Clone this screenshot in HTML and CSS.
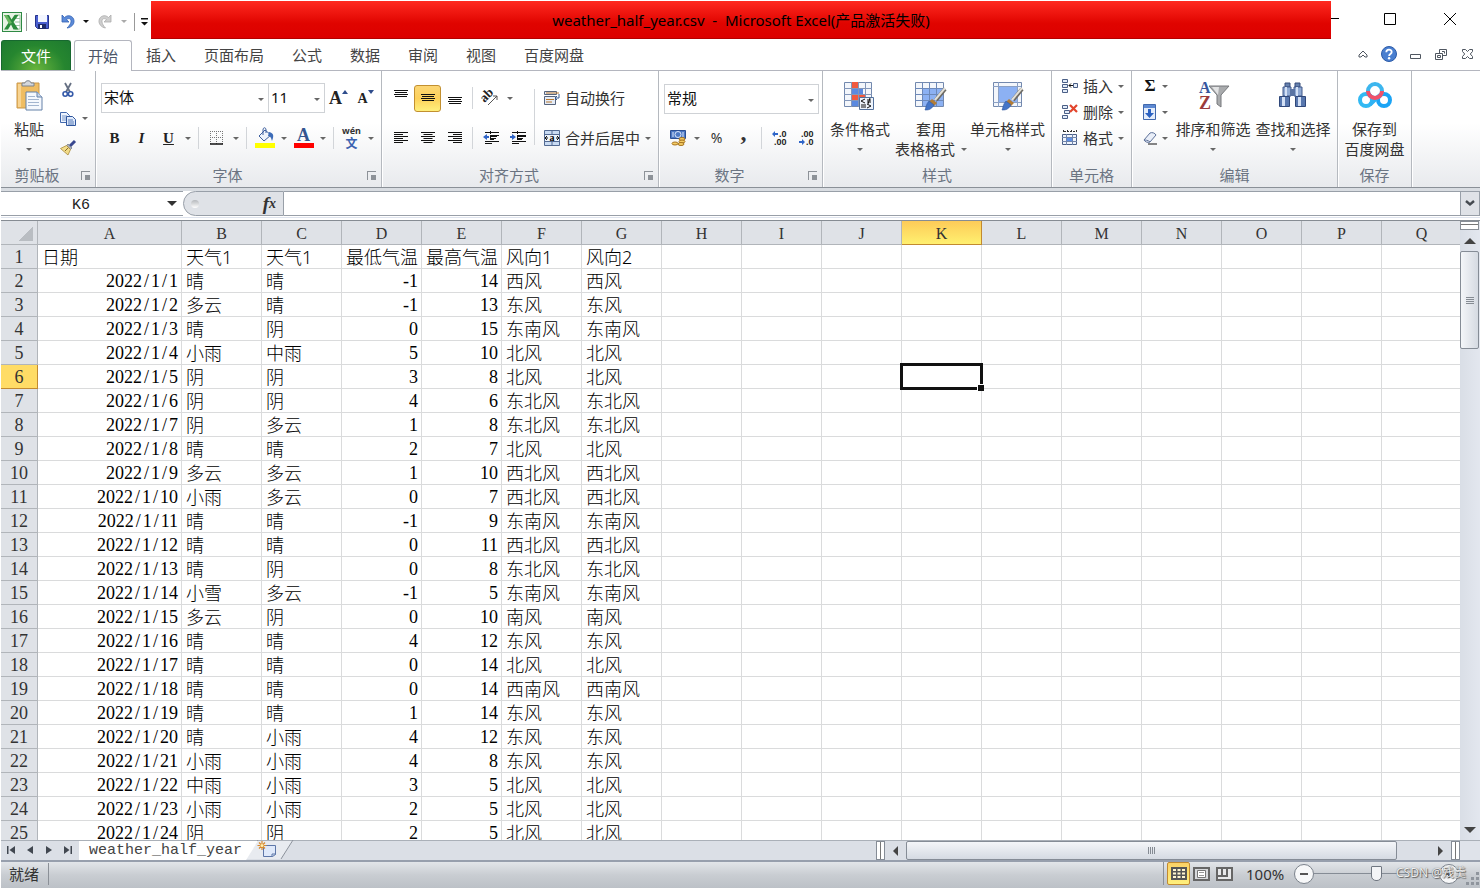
FILE: index.html
```html
<!DOCTYPE html>
<html lang="zh-CN">
<head>
<meta charset="utf-8">
<title>weather_half_year.csv - Microsoft Excel</title>
<link rel="stylesheet" href="styles.css">
</head>
<body>
<div class="app">
  <header class="titlebar">
    <div class="quick">
      <svg class="logo" width="20" height="20" viewBox="0 0 20 20"><rect x=".5" y=".5" width="19" height="19" fill="#e8f3e4" stroke="#2f8a45"/><path d="M13 3h5v14h-5" fill="#fff" stroke="#9cc7a0"/><path d="M13 6.500h5M13 10h5M13 13.500h5" stroke="#9cc7a0"/><path d="M2 3h5l2.500 4.500L12.500 3h4L11.500 10l5 7.500h-5l-2.500-5-3 5H2L7 10z" fill="#2c8c3c"/><path d="M2 3h3l5 8-3 1z" fill="#69b660"/></svg>
      <i class="qsep"></i>
      <button aria-label="保存"><svg width="16" height="16" viewBox="0 0 16 16"><path d="M1.500 1.500h13v13h-11l-2-2z" fill="#4a5fd0" stroke="#26348c"/><path d="M4 1h9v7H4z" fill="#f3f6ff"/><path d="M4 10h8v5H4z" fill="#1e2b6b"/><path d="M6 11h2v3H6z" fill="#fff"/></svg></button>
      <button aria-label="撤消"><svg width="16" height="16" viewBox="0 0 16 16"><path d="M2 1v7h7L6.500 5.600C9 3.500 11.500 5 11 8c-.3 2-2 4-4 6C11.500 13.500 14.500 10 14 6.500 13.500 2 8 0 4.500 3.500z" fill="#5b8ad8" stroke="#3463b5" stroke-width=".8"/></svg></button>
      <button class="arrow dark" aria-label="撤消选项"></button>
      <button aria-label="重做"><svg width="16" height="16" viewBox="0 0 16 16"><path d="M14 1v7H7l2.500-2.400C7 3.500 4.500 5 5 8c.3 2 1.500 4 3.500 6C4.500 13.500 1.500 10 2 6.500 2.500 2 8 0 11.500 3.500z" fill="#cfcfcf" stroke="#acacac" stroke-width=".8"/></svg></button>
      <button class="arrow pale" aria-label="重做选项"></button>
      <i class="qsep"></i>
      <button class="custom" aria-label="自定义快速访问工具栏"><svg width="7" height="8" viewBox="0 0 7 8"><path d="M0 0h7v1.500H0zM0 4h7L3.500 7.500z" fill="#111"/></svg></button>
    </div>
    <h1 class="title">weather_half_year.csv&nbsp; -&nbsp; Microsoft Excel(产品激活失败)</h1>
    <div class="window">
      <button class="wmin" aria-label="最小化"><svg width="8" height="12" viewBox="0 0 8 12"><path d="M0 5.500h8" stroke="#000"/></svg></button>
      <button aria-label="最大化"><svg width="12" height="12" viewBox="0 0 12 12"><path d="M.5.5h11v11H.5z" fill="none" stroke="#000"/></svg></button>
      <button aria-label="关闭"><svg width="12" height="12" viewBox="0 0 12 12"><path d="M0 0l12 12M12 0L0 12" stroke="#000"/></svg></button>
    </div>
  </header>

  <nav class="tabs">
    <button class="file">文件</button>
    <button class="tab active">开始</button>
    <button class="tab">插入</button>
    <button class="tab">页面布局</button>
    <button class="tab">公式</button>
    <button class="tab">数据</button>
    <button class="tab">审阅</button>
    <button class="tab">视图</button>
    <button class="tab">百度网盘</button>
    <div class="tabtools">
      <button aria-label="折叠功能区"><svg width="10" height="9" viewBox="0 0 10 9"><path d="M5 1L1 5v2h2l2-2 2 2h2V5z" fill="#fff" stroke="#4f5660"/></svg></button>
      <button aria-label="帮助"><svg width="16" height="16" viewBox="0 0 16 16"><circle cx="8" cy="8" r="7.500" fill="#4a7fd0" stroke="#2c5ba8"/><path d="M5.300 6.200C5.300 2.800 10.700 2.900 10.700 6c0 2-2.600 2-2.600 4" fill="none" stroke="#fff" stroke-width="1.800"/><circle cx="8.100" cy="12.200" r="1.200" fill="#fff"/></svg></button>
      <button aria-label="最小化窗口"><svg width="11" height="9" viewBox="0 0 11 9"><path d="M.5 4.500h10v4H.5z" fill="#fff" stroke="#4f5660"/></svg></button>
      <button aria-label="还原窗口"><svg width="12" height="11" viewBox="0 0 12 11"><path d="M4.500.5h7v6h-7z" fill="#fff" stroke="#4f5660"/><path d="M7 2.500h2.500v2" fill="none" stroke="#4f5660"/><path d="M.5 4.500h7v6h-7z" fill="#fff" stroke="#4f5660"/><path d="M2.500 6.500h3v2h-3z" fill="none" stroke="#4f5660"/></svg></button>
      <button aria-label="关闭窗口"><svg width="11" height="10" viewBox="0 0 11 10"><path d="M.5.5h3l2 2 2-2h3v2L8.300 5l2.200 2.500v2h-3l-2-2-2 2h-3v-2L2.700 5 .5 2.500z" fill="#fff" stroke="#4f5660"/></svg></button>
    </div>
  </nav>

  <main class="ribbon">
    <section class="group clip">
      <div class="body row">
        <button class="big"><svg width="32" height="32" viewBox="0 0 32 32"><path d="M4 3h22v25H4z" fill="#f0bd62" stroke="#c9974a"/><path d="M5 4h3v23H5z" fill="#f8d492"/><path d="M9 6V3h3c0-3 6-3 6 0h3v3z" fill="#d4d7dc" stroke="#7d838c"/><path d="M13 12h11l5 5v13H13z" fill="#f5f8fd" stroke="#6581a8"/><path d="M24 12v5h5" fill="#cbd8eb" stroke="#6581a8"/><path d="M15 16.500h7M15 19.500h11M15 22.500h11M15 25.500h11" stroke="#a3b5cf"/></svg><span>粘贴</span><i class="tri"></i></button>
        <div class="clipcol">
          <button class="ico" aria-label="剪切"><svg width="16" height="16" viewBox="0 0 16 16"><path d="M5 1l5 9M11 1L6 10" stroke="#667083" stroke-width="1.800"/><circle cx="5.200" cy="12" r="2.200" fill="none" stroke="#3459a8" stroke-width="1.600"/><circle cx="10.600" cy="12" r="2.200" fill="none" stroke="#3459a8" stroke-width="1.600"/></svg></button>
          <div class="row"><button class="ico" aria-label="复制"><svg width="16" height="16" viewBox="0 0 16 16"><path d="M.5 1.500h6l3 3v7h-9z" fill="#eef4fd" stroke="#4269ad"/><path d="M2 5h5M2 7h5M2 9h5" stroke="#7897c9"/><path d="M6.500 5.500h6l3 3v6h-9z" fill="#dfeafb" stroke="#2e559c"/><path d="M8 9h5M8 11h6M8 13h6" stroke="#5578b5"/></svg></button><button class="arrow" aria-label="复制选项"></button></div>
          <button class="ico" aria-label="格式刷"><svg width="16" height="16" viewBox="0 0 16 16"><path d="M15 1l-5 5" stroke="#39478f" stroke-width="3"/><path d="M8 4l4 4-1.500 1.500-4-4z" fill="#a8adba" stroke="#5d6370" stroke-width=".6"/><path d="M6.500 5.500l4 4L8 15 .5 8.500z" fill="#f2dc8a" stroke="#a88a3a" stroke-width=".8"/><path d="M5 11l3-3" stroke="#8a6d28"/></svg></button>
        </div>
      </div>
      <footer><span>剪贴板</span><button class="launch" aria-label="剪贴板设置"></button></footer>
    </section>

    <section class="group font">
      <div class="body lines">
        <div class="row">
          <label class="combo fname"><select aria-label="字体"><option>宋体</option></select></label><label class="combo fsize"><select aria-label="字号"><option>11</option></select></label>
          <button class="ico serif grow" aria-label="增大字号">A<svg width="6" height="4" viewBox="0 0 6 4"><path d="M0 4h6L3 0z" fill="#2e4c8c"/></svg></button>
          <button class="ico serif shrink" aria-label="减小字号">A<svg width="6" height="4" viewBox="0 0 6 4"><path d="M0 0h6L3 4z" fill="#2e4c8c"/></svg></button>
        </div>
        <div class="row">
          <button class="ico serif">B</button><button class="ico serif it">I</button><button class="ico serif un">U</button><button class="arrow" aria-label="下划线选项"></button><i class="sep"></i>
          <button class="ico" aria-label="边框"><svg width="14" height="14" viewBox="0 0 14 14"><path d="M.5 0v13M6.500 0v13M12.500 0v13M0 .5h13M0 6.500h13" stroke="#777" stroke-dasharray="1 1"/><path d="M0 13h13" stroke="#111" stroke-width="1.500"/></svg></button><button class="arrow" aria-label="边框选项"></button><i class="sep"></i>
          <button class="ico" aria-label="填充颜色"><svg width="20" height="20" viewBox="0 0 20 20"><path d="M4 8l6-6 6 5-7 6z" fill="#eef3fb" stroke="#3d5f9e"/><path d="M8 7V2C8-1 11-1 11 2v3" fill="none" stroke="#3d5f9e"/><path d="M14 4c5 1 5 4 3 9-1-4-2-5-4-5z" fill="#3d6cb8"/><path d="M0 15h20v5H0z" fill="#ff0"/></svg></button><button class="arrow" aria-label="填充颜色选项"></button>
          <button class="ico serif fcolor" aria-label="字体颜色">A</button><button class="arrow" aria-label="字体颜色选项"></button><i class="sep"></i>
          <button class="ico pinyin" aria-label="拼音指南"><small>wén</small><b>文</b></button><button class="arrow" aria-label="拼音选项"></button>
        </div>
      </div>
      <footer><span>字体</span><button class="launch" aria-label="字体设置"></button></footer>
    </section>

    <section class="group align">
      <div class="body row top">
        <div class="lines">
          <div class="row">
            <button class="ico" aria-label="顶端对齐"><svg width="14" height="20" viewBox="0 0 14 20"><path d="M0 2.500h14M1 4.500h12M0 6.500h14M1 8.500h12" stroke="#111"/></svg></button>
            <button class="ico on" aria-label="垂直居中"><svg width="14" height="20" viewBox="0 0 14 20"><path d="M0 6.500h14M1 8.500h12M0 10.500h14M1 12.500h12" stroke="#111"/></svg></button>
            <button class="ico" aria-label="底端对齐"><svg width="14" height="20" viewBox="0 0 14 20"><path d="M0 9.500h14M1 11.500h12M0 13.500h14M1 15.500h12" stroke="#111"/></svg></button><i class="sep"></i>
            <button class="ico" aria-label="方向"><svg width="16" height="16" viewBox="0 0 16 16"><text x="-1" y="9" transform="rotate(-45 5 8)" font-family="Liberation Serif" font-weight="700" font-size="13" fill="#222">ab</text><path d="M5 15l9-9M14 6h-4M14 6v4" stroke="#555" fill="none"/></svg></button><button class="arrow" aria-label="方向选项"></button>
          </div>
          <div class="row">
            <button class="ico" aria-label="左对齐"><svg width="14" height="12" viewBox="0 0 14 12"><path d="M0 .5h14M0 2.500h9M0 4.500h14M0 6.500h9M0 8.500h14M0 10.500h9" stroke="#111"/></svg></button>
            <button class="ico" aria-label="居中"><svg width="14" height="12" viewBox="0 0 14 12"><path d="M0 .5h14M2.500 2.500h9M0 4.500h14M2.500 6.500h9M0 8.500h14M2.500 10.500h9" stroke="#111"/></svg></button>
            <button class="ico" aria-label="右对齐"><svg width="14" height="12" viewBox="0 0 14 12"><path d="M0 .5h14M5 2.500h9M0 4.500h14M5 6.500h9M0 8.500h14M5 10.500h9" stroke="#111"/></svg></button><i class="sep"></i>
            <button class="ico" aria-label="减少缩进"><svg width="16" height="14" viewBox="0 0 16 14"><path d="M2 1.500h14M7 4.500h9M7 7.500h6M2 10.500h14M2 12.500h7" stroke="#111"/><path d="M7 5h7M7 8h4" stroke="#111" stroke-width="2"/><path d="M7.500 0v14" stroke="#111" stroke-dasharray="1 1"/><path d="M0 6l4-3v2h2v2H4v2z" fill="#2f65c8"/></svg></button>
            <button class="ico" aria-label="增加缩进"><svg width="16" height="14" viewBox="0 0 16 14"><path d="M2 1.500h14M7 4.500h9M7 7.500h6M2 10.500h14M2 12.500h7" stroke="#111"/><path d="M7 5h9M7 8h5" stroke="#111" stroke-width="2"/><path d="M7.500 0v14" stroke="#111" stroke-dasharray="1 1"/><path d="M6 6L2 3v2H0v2h2v2z" fill="#2f65c8"/></svg></button>
          </div>
        </div>
        <i class="sep tall"></i>
        <div class="lines wide">
          <button class="text"><svg width="16" height="16" viewBox="0 0 16 16"><path d="M.5 1.500h12v3H.5z" fill="#e5ecf7" stroke="#56647d"/><path d="M.5 6.500h11v8H.5z" fill="#e5ecf7" stroke="#56647d"/><path d="M2 3h13M2 9.500h8M2 12h6" stroke="#b9792f"/><path d="M15 4v4h-3M13 6l-2 2 2 2" fill="none" stroke="#35588f"/></svg><span>自动换行</span></button>
          <div class="row"><button class="text"><svg width="16" height="16" viewBox="0 0 16 16"><path d="M.5.5h15v15H.5z" fill="#c9dbf3" stroke="#536a92"/><path d="M0 4.500h16M0 11.500h16M8 0v4M8 12v4" stroke="#536a92"/><path d="M1 5h14v6H1z" fill="#eef4fc"/><path d="M1 8h3M12 8h3M3 6l-2 2 2 2M13 6l2 2-2 2" stroke="#111" fill="none"/><text x="5.500" y="10.500" font-family="Liberation Serif" font-size="10" font-weight="700">a</text></svg><span>合并后居中</span></button><button class="arrow" aria-label="合并选项"></button></div>
        </div>
      </div>
      <footer><span>对齐方式</span><button class="launch" aria-label="对齐设置"></button></footer>
    </section>

    <section class="group number">
      <div class="body lines">
        <label class="combo fmt"><select aria-label="数字格式"><option>常规</option></select></label>
        <div class="row">
          <button class="ico" aria-label="会计数字格式"><svg width="16" height="16" viewBox="0 0 16 16"><path d="M.5.5h15v8H.5z" fill="#4d79c4" stroke="#2b4f94"/><ellipse cx="8" cy="4.500" rx="3" ry="3" fill="none" stroke="#dbe7fa"/><path d="M3 2v5M13 2v5" stroke="#dbe7fa"/><ellipse cx="12" cy="9" rx="3" ry="1.500" fill="#f5cd64" stroke="#a77421"/><ellipse cx="12" cy="11.500" rx="3" ry="1.500" fill="#f5cd64" stroke="#a77421"/><ellipse cx="5" cy="13.500" rx="3" ry="1.500" fill="#f5cd64" stroke="#a77421"/><ellipse cx="11" cy="14" rx="3" ry="1.500" fill="#f5cd64" stroke="#a77421"/></svg></button><button class="arrow" aria-label="会计格式选项"></button><button class="ico pct">%</button><button class="ico comma">,</button><i class="sep"></i>
          <button class="ico" aria-label="增加小数位数"><svg width="16" height="16" viewBox="0 0 16 16"><path d="M0 4l3-3v2h3v2H3v2z" fill="#2f65c8"/><text x="7" y="7" class="dec">.0</text><text x="2" y="15" class="dec">.00</text></svg></button>
          <button class="ico" aria-label="减少小数位数"><svg width="16" height="16" viewBox="0 0 16 16"><text x="2" y="7" class="dec">.00</text><path d="M6 12L3 9v2H0v2h3v2z" fill="#2f65c8"/><text x="7" y="15" class="dec">.0</text></svg></button>
        </div>
      </div>
      <footer><span>数字</span><button class="launch" aria-label="数字设置"></button></footer>
    </section>

    <section class="group styles">
      <div class="body row">
        <button class="big"><svg width="32" height="32" viewBox="0 0 32 32"><path d="M.5 2.500h27v24H.5z" fill="#f3f6fb" stroke="#7389ae"/><path d="M7 2h7v6H7zM7 14h14v6H7z" fill="#f0593e"/><path d="M7 8h12v6H7zM7 20h7v6H7z" fill="#5a89e0"/><path d="M0 8.500h28M0 14.500h28M0 20.500h28M7.500 2v25M14.500 2v25M21.500 2v25" stroke="#8397ba"/><path d="M15.500 17.500h14v12h-14z" fill="#eef4fc" stroke="#53719c"/><path d="M21 19l-4 2 4 2M17 25h5M17 27h5M23 20h4M23 22h4M26 18l-2 6M23 24l4 2-4 2" stroke="#111" fill="none"/></svg><span>条件格式</span><i class="tri"></i></button>
        <button class="big"><svg width="32" height="32" viewBox="0 0 32 32"><path d="M.5 2.500h28v24H.5z" fill="#f3f6fb" stroke="#7389ae"/><path d="M7 8h21v18H7z" fill="#8cb1f3"/><path d="M0 8.500h28M0 14.500h28M0 20.500h28M7.500 2v25M14.500 2v25M21.500 2v25" stroke="#6d89b9"/><use href="#brush"/></svg><span>套用<br>表格格式<i class="tri side"></i></span></button>
        <button class="big"><svg width="32" height="32" viewBox="0 0 32 32"><path d="M1.500 2.500h28v24h-28z" fill="#f3f6fb" stroke="#7389ae"/><path d="M6 7h19v15H6z" fill="#8cb1f3"/><path d="M1 6.500h28M1 22.500h28M6.500 2v25M25.500 2v25" stroke="#8ba0c4"/><g id="brush"><path d="M30 9L21 20" stroke="#6d6a62" stroke-width="4"/><path d="M30 8L20 20" stroke="#e2e0d8" stroke-width="2"/><path d="M17 19l5 4-3 3-5-4z" fill="#b27c36"/><path d="M14 21l5 4c-3 5-6 5-9 5 1-2 1-6 4-9z" fill="#4475c8" stroke="#2f579e" stroke-width=".6"/></g></svg><span>单元格样式</span><i class="tri"></i></button>
      </div>
      <footer><span>样式</span></footer>
    </section>

    <section class="group cells">
      <div class="body stack">
        <div class="row"><button class="text"><svg width="16" height="16" viewBox="0 0 16 16"><path d="M.5 1.500h5v3h-5zM.5 6.500h5v3h-5zM.5 11.500h5v3h-5zM11.500 5.500h4v4h-4z" fill="#e3ecf9" stroke="#4a5f86"/><path d="M7 7.500h4M9 5.500L7 7.500l2 2" stroke="#111" fill="none"/></svg><span>插入</span></button><button class="arrow" aria-label="插入选项"></button></div>
        <div class="row"><button class="text"><svg width="16" height="16" viewBox="0 0 16 16"><path d="M.5 1.500h5v3h-5zM2.500 6.500h5v3h-5zM.5 11.500h5v3h-5z" fill="#e3ecf9" stroke="#4a5f86"/><path d="M8 1l7 7M15 1L8 8" stroke="#e2452c" stroke-width="2.200"/></svg><span>删除</span></button><button class="arrow" aria-label="删除选项"></button></div>
        <div class="row"><button class="text"><svg width="16" height="16" viewBox="0 0 16 16"><path d="M.5 4.500h14v10H.5z" fill="#eef3fb" stroke="#4a5f86"/><path d="M5 8h5v4H5z" fill="#5c8fe6"/><path d="M0 7.500h15M0 11.500h15M4.500 4v11M10.500 4v11" stroke="#6f84ab"/><path d="M1.500 0v3M14.500 0v3M2 1.500h12M5.500 0v3M9.500 0v3" stroke="#333" stroke-dasharray="2 1"/></svg><span>格式</span></button><button class="arrow" aria-label="格式选项"></button></div>
      </div>
      <footer><span>单元格</span></footer>
    </section>

    <section class="group edit">
      <div class="body row">
        <div class="stack">
          <div class="row"><button class="mini sigma">Σ</button><button class="arrow" aria-label="求和选项"></button></div>
          <div class="row"><button class="mini" aria-label="填充"><svg width="14" height="16" viewBox="0 0 14 16"><path d="M.5.5h12v15H.5z" fill="#e4edfb" stroke="#4169ad"/><path d="M1 1h11v3H1z" fill="#5d89d2"/><path d="M5 5h3v4h3l-4.500 5L2 9h3z" fill="#2b62c2"/></svg></button><button class="arrow" aria-label="填充选项"></button></div>
          <div class="row"><button class="mini" aria-label="清除"><svg width="14" height="14" viewBox="0 0 14 14"><path d="M1 9l6-7c2-1 5 0 6 2l-6 7c-2 1-5 0-6-2z" fill="#e9eef8" stroke="#5d7199"/><path d="M1 9c1 0 4 0 6 2" fill="none" stroke="#5d7199"/><path d="M5 13h9" stroke="#111"/></svg></button><button class="arrow" aria-label="清除选项"></button></div>
        </div>
        <button class="big"><svg width="32" height="32" viewBox="0 0 32 32"><text x="2" y="13" font-family="Liberation Serif" font-weight="700" font-size="16" fill="#36569e">A</text><text x="2" y="29" font-family="Liberation Serif" font-weight="700" font-size="18" fill="#9b3b3b">Z</text><path d="M12 6h20l-8 9v12l-4-3v-9z" fill="#a9abad" stroke="#77797c"/><path d="M15 7h7l-1 8z" fill="#e2e3e4"/></svg><span>排序和筛选</span><i class="tri"></i></button>
        <button class="big"><svg width="32" height="32" viewBox="0 0 32 32"><path d="M8 3h5v4H8zM18 3h5v4h-5z" fill="#6681ae" stroke="#374d7a"/><path d="M6 7h8v9H6zM17 7h8v9h-8z" fill="#8fa9d3" stroke="#41598a"/><path d="M13 9h5v7h-5z" fill="#5a74a3"/><path d="M2.500 16.500h10v10h-10zM18.500 16.500h10v10h-10z" fill="#5877ae" stroke="#30487a"/><path d="M5 17h3v9H5zM21 17h3v9h-3zM8 7h2v9H8zM19 7h2v9h-2z" fill="#d3e0f5"/></svg><span>查找和选择</span><i class="tri"></i></button>
      </div>
      <footer><span>编辑</span></footer>
    </section>

    <section class="group cloud">
      <div class="body row">
        <button class="big"><svg width="34" height="32" viewBox="0 0 34 32"><circle cx="8" cy="20" r="6" fill="none" stroke="#32b9f3" stroke-width="4"/><circle cx="26" cy="20" r="6" fill="none" stroke="#1ba4f5" stroke-width="4"/><path d="M12 24.500L22 15" stroke="#2fb2f4" stroke-width="4"/><circle cx="17" cy="11" r="7" fill="none" stroke="#3cb6ee" stroke-width="4"/><path d="M10 11a7 7 0 0 0 14 0" fill="none" stroke="#f0506a" stroke-width="4"/></svg><span>保存到<br>百度网盘</span></button>
      </div>
      <footer><span>保存</span></footer>
    </section>
  </main>

  <div class="formula">
    <label class="namebox"><input value="K6" aria-label="名称框"><i class="tri big-tri"></i></label>
    <div class="fx"><i class="knob"></i><button aria-label="插入函数"><em>f</em><sub>x</sub></button></div>
    <input class="finput" aria-label="编辑栏">
    <button class="expand" aria-label="展开编辑栏"><svg width="10" height="7" viewBox="0 0 10 7"><path d="M1 1l4 3.500L9 1" fill="none" stroke="#454a50" stroke-width="2.400"/></svg></button>
  </div>

  <div class="work">
    <div class="gridwrap">
      <table class="grid">
        <thead><tr id="heads"></tr></thead>
        <tbody id="rows"></tbody>
      </table>
    </div>
    <div class="vscroll">
      <i class="vsplit"></i>
      <button class="up" aria-label="向上滚动"></button>
      <div class="vthumb"><i></i></div>
      <button class="down" aria-label="向下滚动"></button>
    </div>
  </div>

  <div class="sheetbar">
    <div class="nav">
      <button aria-label="第一张"><svg width="8" height="8" viewBox="0 0 8 8"><path d="M0 0h1.500v8H0zM8 0v8L2.500 4z"/></svg></button>
      <button aria-label="上一张"><svg width="6" height="8" viewBox="0 0 6 8"><path d="M6 0v8L0 4z"/></svg></button>
      <button aria-label="下一张"><svg width="6" height="8" viewBox="0 0 6 8"><path d="M0 0v8l6-4z"/></svg></button>
      <button aria-label="最后一张"><svg width="8" height="8" viewBox="0 0 8 8"><path d="M6.500 0H8v8H6.500zM0 0v8l5.500-4z"/></svg></button>
    </div>
    <button class="sheet">weather_half_year</button>
    <button class="newsheet" aria-label="插入工作表"><svg width="52" height="20" viewBox="0 0 52 20"><path d="M0 19L13 1h35L36 19z" fill="#e8ebf0"/><path d="M0 19L13 0M36 19L48 0" stroke="#8b919b"/><path d="M18.500 5.500h12v9l-3 2h-9z" fill="#dfe9fa" stroke="#5d76a8"/><path d="M27 17v-3h4" fill="none" stroke="#5d76a8"/><path d="M17 1v9M12.500 5.500h9M14 2.500l6 6M20 2.500l-6 6" stroke="#d98a2c" stroke-width="1.200"/><circle cx="17" cy="5.500" r="1.500" fill="#fff0b0"/></svg></button>
    <div class="hscroll">
      <i class="hsplit"></i>
      <button class="left" aria-label="向左滚动"></button>
      <div class="hthumb"><i></i></div>
      <button class="right" aria-label="向右滚动"></button>
      <i class="hsplit"></i>
    </div>
    <i class="corner"></i>
  </div>

  <footer class="status">
    <span class="ready">就绪</span>
    <div class="views">
      <button class="von" aria-label="普通"><svg width="16" height="14" viewBox="0 0 16 14"><path d="M0 0h16v13H0z" fill="#555"/><path d="M2 2h3v2H2zM6.500 2h3v2h-3zM11 2h3v2h-3zM2 5.500h3v2H2zM6.500 5.500h3v2h-3zM11 5.500h3v2h-3zM2 9h3v2H2zM6.500 9h3v2h-3zM11 9h3v2h-3z" fill="#fff5cf"/></svg></button>
      <button aria-label="页面布局视图"><svg width="17" height="14" viewBox="0 0 17 14"><path d="M1 1h15v12H1z" fill="#d7d9dc" stroke="#666" stroke-width="2"/><path d="M4.500 3.500h8v7h-8z" fill="#fff" stroke="#777"/><path d="M6 5.500h5M6 8.500h5" stroke="#999"/></svg></button>
      <button aria-label="分页预览"><svg width="17" height="14" viewBox="0 0 17 14"><path d="M0 0h17v14H0z" fill="#666"/><path d="M2 2h3v6H2zM7 2h3v6H7zM12 2h3v10H2v-2h10z" fill="#e9eaec"/></svg></button>
    </div>
    <span class="zoom">100%</span>
    <button class="round" aria-label="缩小"><svg width="20" height="20" viewBox="0 0 20 20"><circle cx="10" cy="10" r="9.500" fill="#f7f8f9" stroke="#7b828b"/><path d="M6 10h8" stroke="#555" stroke-width="2"/></svg></button>
    <input class="slider" type="range" min="0" max="100" value="50" aria-label="缩放比例">
    <button class="round" aria-label="放大"><svg width="20" height="20" viewBox="0 0 20 20"><circle cx="10" cy="10" r="9.500" fill="#f7f8f9" stroke="#7b828b"/><path d="M6 10h8M10 6v8" stroke="#555" stroke-width="2"/></svg></button>
    <svg class="gripper" width="14" height="14" viewBox="0 0 14 14"><path d="M10 1h3v3h-3zM5 6h3v3H5zM10 6h3v3h-3zM0 11h3v3H0zM5 11h3v3H5zM10 11h3v3h-3z" fill="#8f959d"/></svg>
    <span class="mark">CSDN @残羹</span>
  </footer>
</div>
<script src="app.js"></script>
</body>
</html>
```
FILE: app.js
```js
const columns = "ABCDEFGHIJKLMNOPQ".split("");
const selected = { col: "K", row: 6 };
const data = [
  "日期 天气1 天气1 最低气温 最高气温 风向1 风向2",
  "2022/1/1 晴 晴 -1 14 西风 西风",
  "2022/1/2 多云 晴 -1 13 东风 东风",
  "2022/1/3 晴 阴 0 15 东南风 东南风",
  "2022/1/4 小雨 中雨 5 10 北风 北风",
  "2022/1/5 阴 阴 3 8 北风 北风",
  "2022/1/6 阴 阴 4 6 东北风 东北风",
  "2022/1/7 阴 多云 1 8 东北风 东北风",
  "2022/1/8 晴 晴 2 7 北风 北风",
  "2022/1/9 多云 多云 1 10 西北风 西北风",
  "2022/1/10 小雨 多云 0 7 西北风 西北风",
  "2022/1/11 晴 晴 -1 9 东南风 东南风",
  "2022/1/12 晴 晴 0 11 西北风 西北风",
  "2022/1/13 晴 阴 0 8 东北风 东北风",
  "2022/1/14 小雪 多云 -1 5 东南风 东南风",
  "2022/1/15 多云 阴 0 10 南风 南风",
  "2022/1/16 晴 晴 4 12 东风 东风",
  "2022/1/17 晴 晴 0 14 北风 北风",
  "2022/1/18 晴 晴 0 14 西南风 西南风",
  "2022/1/19 晴 晴 1 14 东风 东风",
  "2022/1/20 晴 小雨 4 12 东风 东风",
  "2022/1/21 小雨 小雨 4 8 东风 东风",
  "2022/1/22 中雨 小雨 3 5 北风 北风",
  "2022/1/23 小雨 小雨 2 5 北风 北风",
  "2022/1/24 阴 阴 2 5 北风 北风"
].map(line => line.split(" "));

function cell(tag, text, ...classes) {
  const el = document.createElement(tag);
  el.textContent = text;
  el.className = classes.filter(Boolean).join(" ");
  return el;
}

const heads = document.getElementById("heads");
heads.append(cell("th", "", "all"));
columns.forEach(c => heads.append(cell("th", c, c === "A" && "first", c === selected.col && "hot")));
heads.append(cell("th", "", "rest"));

const body = document.getElementById("rows");
data.forEach((values, i) => {
  const tr = document.createElement("tr");
  const row = i + 1;
  tr.append(cell("th", row, row === selected.row && "hot"));
  columns.forEach((c, j) => {
    const value = values[j] || "";
    const numeric = /^-?\d[\d/]*$/.test(value);
    const td = cell("td", value, numeric && "num", c === selected.col && row === selected.row && "cursor");
    if (value.includes("/")) {
      td.textContent = "";
      value.split("/").forEach((part, k) => {
        if (k) td.append(cell("span", "/", "slash"));
        td.append(part);
      });
    }
    tr.append(td);
  });
  tr.append(cell("td", ""));
  body.append(tr);
});
```
FILE: styles.css
```css
* { box-sizing: border-box; }
body {
  margin: 0;
  background: #fff;
  color: #333;
  font: 15px/20px "Noto Sans", "Noto Sans CJK SC", sans-serif;
}
button, input, select { font: inherit; color: inherit; padding: 0; border: 0; background: none; border-radius: 0; outline: 0; }
button { display: flex; align-items: center; justify-content: center; }
svg { display: block; flex: none; overflow: visible; }
i { display: block; flex: none; }
.app { display: flex; flex-direction: column; height: 100vh; padding: 0 1px; overflow: hidden; }
.row { display: flex; align-items: center; }

/* Title bar */
.titlebar { display: flex; height: 40px; flex: none; padding-top: 1px; }
.quick { display: flex; align-items: center; width: 150px; padding: 2px 0 0 1px; }
.quick button { width: 26px; height: 24px; }
.quick .arrow { width: 12px; }
.quick .custom { width: 14px; }
.qsep { width: 1px; height: 18px; margin: 0 2px 0 4px; background: #999; }
.title { flex: 1; height: 38px; margin: 0; background: linear-gradient(#ff2a20, #e00400 60%, #dc0000); border-bottom: 1px solid #b40000; color: #000; font: 15px/38px "Noto Sans", "Noto Sans CJK SC", sans-serif; text-align: center; }
.window { display: flex; width: 149px; padding-bottom: 2px; }
.window button { width: 60px; height: 36px; }
.window .wmin { width: 29px; justify-content: flex-start; }

/* Tabs */
.tabs { display: flex; height: 31px; flex: none; border-bottom: 1px solid #b4b6bf; font-size: 15px; }
.file { width: 70px; height: 30px; margin-right: 3px; color: #fff; border: 1px solid #17682f; border-bottom: 0; border-radius: 3px 3px 0 0; background: radial-gradient(ellipse at 50% 100%, #69b53d, #26862f 60%, #1d7a30); }
.tab { height: 30px; padding: 0 14px; color: #444; }
.tab.active { height: 31px; padding: 0 13px; border: 1px solid #b4b6bf; border-bottom: 0; border-radius: 3px 3px 0 0; background: #fff; color: #4b5568; }
.tabtools { display: flex; margin-left: auto; }
.tabtools button { width: 26px; height: 28px; }

/* Ribbon */
.ribbon { display: flex; flex: none; height: 117px; background: linear-gradient(#fff 45%, #e8eaed); border-bottom: 1px solid #8a9097; }
.group { display: flex; flex-direction: column; flex: none; border-right: 1px solid #b5b9bf; box-shadow: 1px 0 #fff; }
.clip { width: 95px; }
.font { width: 286px; }
.align { width: 277px; }
.number { width: 164px; }
.styles { width: 229px; }
.cells { width: 80px; }
.edit { width: 206px; }
.cloud { width: 74px; }
.body { flex: 1; }
.body.row { align-items: flex-start; }
.group footer { display: flex; height: 24px; align-items: center; color: #6b7482; }
.group footer span { flex: 1; text-align: center; }
.group footer span:not(:last-child) { padding-right: 8px; }
.launch { position: relative; width: 9px; height: 9px; margin-right: 5px; border: solid #8d9298; border-width: 1px 0 0 1px; }
.launch::after { content: ""; position: absolute; right: 0; bottom: 0; width: 5px; height: 5px; background: #8d9298; }
.lines { display: flex; flex-direction: column; gap: 12px; padding: 13px 0 0 5px; }
.lines .row { height: 28px; }
.ico { width: 27px; height: 27px; flex: none; }
.ico.on { border: 1px solid #c29030; border-radius: 3px; background: linear-gradient(#fcd674, #fdd15b 50%, #fff07c); }
.arrow { width: 12px; height: 24px; flex: none; }
.arrow::after, .tri, .combo::after { content: ""; width: 0; height: 0; border: 3px solid transparent; border-top-color: #666; border-bottom: 0; }
.arrow.dark::after { border-top-color: #111; }
.arrow.pale::after { border-top-color: #aaa; }
.sep { width: 1px; height: 22px; margin: 0 4px; background: #d2d5d9; }
.sep.tall { height: 56px; margin: 18px 0 0 3px; }
.combo { position: relative; display: block; height: 30px; border: 1px solid #cfd2d6; background: #fff; color: #111; }
.combo::after { position: absolute; right: 4px; top: 14px; }
.combo select { width: 100%; height: 26px; padding-left: 2px; appearance: none; }
.fname { width: 168px; }
.fsize { width: 57px; margin-left: -1px; }
.fmt { width: 155px; margin-bottom: -2px; }
.serif { font-family: "Liberation Serif", serif; font-weight: 700; font-size: 15px; color: #222; }
.it { font-style: italic; }
.un { text-decoration: underline; }
.grow { align-items: flex-start; font-size: 18px; line-height: 26px; }
.shrink { align-items: flex-start; font-size: 14px; line-height: 28px; }
.grow svg, .shrink svg { margin-top: 5px; }
.fcolor { width: 27px; height: 20px; font-size: 18px; line-height: 15px; padding-bottom: 5px; color: #34558f; background: linear-gradient(#f00, #f00) center bottom / 20px 5px no-repeat; }
.pinyin { flex-direction: column; color: #3a62b0; }
.pinyin small { font-size: 9px; line-height: 12px; font-weight: 700; color: #333; }
.pinyin b { font-size: 12px; line-height: 14px; }
.pct { font-size: 14px; }
.comma { font: 700 24px/12px "Liberation Serif", serif; padding-bottom: 12px; }
.dec { font: 700 9px "Liberation Sans", sans-serif; fill: #222; }
.text { gap: 5px; height: 26px; white-space: nowrap; }
.wide { padding-left: 9px; }
.wide > .text { height: 28px; align-self: flex-start; }
.wide .arrow { margin-left: 2px; }
.stack { display: flex; flex-direction: column; padding-top: 2px; }
.stack .row { height: 26px; }
.cells .stack { padding-left: 10px; }
.cells .arrow { margin-left: 2px; }
.edit .stack { padding-left: 9px; width: 41px; }
.mini { width: 18px; height: 26px; flex: none; }
.sigma { font: 700 17px/20px "Liberation Serif", serif; color: #111; }
.big { position: relative; flex-direction: column; justify-content: flex-start; flex: none; padding-top: 9px; white-space: nowrap; }
.big span { margin-top: 7px; }
.big .tri { margin-top: 9px; }
.big .tri.side { display: inline-block; margin: 0 0 2px 6px; vertical-align: middle; }
.clip .big { width: 56px; }
.clipcol { display: flex; flex-direction: column; gap: 2px; padding-top: 5px; }
.clipcol .ico { width: 22px; }
.clipcol .row { height: 27px; }
.styles .body { padding-left: 2px; }
.styles .big:nth-child(1) { width: 70px; }
.styles .big:nth-child(2) { width: 72px; }
.styles .big:nth-child(3) { width: 81px; }
.edit .big { width: 80px; }
.cloud .big { width: 73px; }

/* Formula bar */
.formula { display: flex; flex: none; height: 33px; padding: 3px 0 4px; background: linear-gradient(#d9dde2 0 3px, #fff 3px 29px, #dfe4ee 29px 30px, #fff 30px); border-bottom: 1px solid #868c93; }
.namebox { display: flex; align-items: center; width: 182px; padding-right: 6px; border: solid #989fa8; border-width: 1px 0; background: #fff; }
.namebox input { flex: 1; min-width: 0; padding: 4px 6px 0 0; text-align: center; font: 15px/20px "Liberation Mono", monospace; color: #222; }
.tri.big-tri { border-width: 5px 5px 0; border-top-color: #333; }
.fx { display: flex; align-items: center; justify-content: space-between; width: 101px; padding: 0 7px; background: #dfe2e7; border: 1px solid #989fa8; border-radius: 13px 0 0 13px; }
.knob { width: 8px; height: 8px; border-radius: 50%; background: linear-gradient(#b5b8bc, #fff); }
.fx button { font: 700 19px/20px "Liberation Serif", serif; color: #333; }
.fx sub { font-size: 14px; line-height: 10px; font-style: italic; }
.finput { flex: 1; min-width: 0; border: solid #989fa8; border-width: 1px 0; background: #fff; }
.expand { width: 20px; border: 1px solid #989fa8; background: #dfe2e7; }

/* Worksheet */
.work { display: flex; flex: 1; min-height: 0; }
.gridwrap { flex: 1; min-width: 0; overflow: hidden; }
.grid { width: 100%; border-collapse: separate; border-spacing: 0; table-layout: fixed; font-size: 18px; font-weight: 300; line-height: 21px; color: #000; }
.grid th, .grid td { height: 24px; padding: 2px 3px 0 4px; border: solid #dadbdc; border-width: 0 1px 1px 0; white-space: nowrap; text-align: left; }
.grid th { width: 80px; padding: 2px 0 0; border-color: #b1b5ba; background: #dfe2e7; text-align: center; font: 18px/21px "Liberation Serif", serif; color: #333; }
.grid thead th { font-size: 16px; }
.grid .all { width: 37px; background: linear-gradient(135deg, transparent 50%, #b9bdc2 50%) 17px 5px / 15px 15px no-repeat #dfe2e7; }
.grid .first { width: 144px; }
.grid .rest { width: auto; }
.grid .hot { border-color: #c28a30; background: linear-gradient(#fdcb58, #fff070); }
.grid tbody .hot { background: #ffdc66; }
.grid .num { text-align: right; font: 18px/21px "Liberation Serif", serif; }
.slash { padding: 0 2px; }
.grid .cursor { position: relative; }
.cursor::before { content: ""; position: absolute; inset: -2px; border: 3px solid #111; }
.cursor::after { content: ""; position: absolute; right: -3px; bottom: -3px; width: 6px; height: 6px; background: #111; border: solid #fff; border-width: 1px 0 0 1px; }

.vscroll { display: flex; flex-direction: column; width: 20px; background: linear-gradient(90deg, #d9dee6, #e3e7ef); }
.vsplit { width: 19px; height: 9px; border: 1px solid #888e96; background: linear-gradient(#fff 2px, #777 2px 3px, #fff 3px); }
.up, .down { width: 19px; height: 21px; }
.up::after { content: ""; border: 6px solid transparent; border-top: 0; border-bottom-color: #444; }
.down::after { content: ""; border: 6px solid transparent; border-bottom: 0; border-top-color: #444; }
.down { margin-top: auto; }
.vthumb { display: flex; align-items: center; justify-content: center; width: 19px; height: 98px; border: 1px solid #858c96; border-radius: 2px; background: linear-gradient(90deg, #f4f6f9, #d5dae2); }
.vthumb i { width: 8px; height: 7px; background: repeating-linear-gradient(#858b93 0 1px, transparent 1px 2px); }

/* Sheet tabs */
.sheetbar { display: flex; flex: none; height: 20px; background: #dbdfe6; border-top: 1px solid #aab0b8; }
.nav { display: flex; width: 78px; fill: #414750; }
.nav button { width: 19px; height: 17px; }
.sheet { position: relative; height: 19px; padding: 0 16px 0 10px; background: #fff; font: 15px/18px "Liberation Mono", monospace; color: #444; clip-path: polygon(0 0, 100% 0, calc(100% - 12px) 100%, 0 100%); }
.newsheet { width: 52px; margin-left: -13px; align-items: flex-start; }
.newsheet svg { margin-top: -1px; }
.hscroll { display: flex; flex: 1; margin-left: auto; max-width: 584px; align-items: center; }
.hsplit { width: 9px; height: 19px; border: 1px solid #858c96; background: linear-gradient(90deg, #fff 3px, #777 3px 4px, #fff 4px); }
.left, .right { width: 21px; height: 19px; }
.left::after { content: ""; border: 5px solid transparent; border-left: 0; border-right-color: #444; }
.right::after { content: ""; border: 5px solid transparent; border-right: 0; border-left-color: #444; }
.right { margin-left: auto; }
.hthumb { display: flex; align-items: center; justify-content: center; flex: 0 1 491px; height: 19px; border: 1px solid #858c96; border-radius: 2px; background: linear-gradient(#f4f6f9, #d5dae2); }
.hthumb i { width: 8px; height: 7px; background: repeating-linear-gradient(90deg, #858b93 0 1px, transparent 1px 2px); }
.corner { width: 20px; background: #dfe3ea; }

/* Status bar */
.status { position: relative; display: flex; align-items: center; flex: none; height: 28px; padding: 0 0 3px 8px; border-top: 2px solid #979fad; background: linear-gradient(#e2e5e9, #c9cdd2 50%, #bcc1c7); }
.ready { padding-right: 9px; border-right: 1px solid #8b9097; line-height: 22px; }
.views { display: flex; align-items: center; margin-left: auto; padding-left: 3px; border-left: 1px solid #8b9097; }
.views button { width: 23px; height: 23px; }
.views .von { border: 1px solid #c28a30; border-radius: 2px; background: linear-gradient(#fbd166, #fff07c); }
.zoom { width: 40px; margin: 0 8px 0 10px; }
.round { width: 20px; height: 22px; }
.slider { appearance: none; width: 125px; height: 20px; margin: 0; background: linear-gradient(#858c95, #858c95) center / 100% 1px no-repeat; }
.slider::-webkit-slider-thumb { appearance: none; width: 11px; height: 15px; border: 1px solid #6f7680; background: #f3f4f6; border-radius: 1px 1px 5px 5px; }
.gripper { align-self: flex-end; margin-left: 7px; }
.mark { position: absolute; right: 14px; top: 1px; font-size: 12px; color: #eee; text-shadow: 0 0 1px #555, 1px 1px 1px #666; }
```
